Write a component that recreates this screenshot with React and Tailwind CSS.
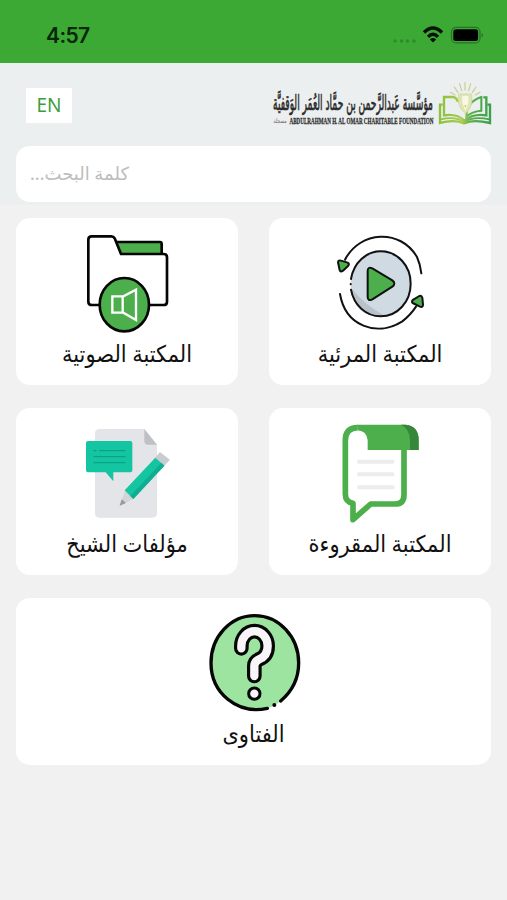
import clsx from "clsx";

const arabicFont = "font-['Noto_Sans','DejaVu_Sans',sans-serif]";

function StatusBar() {
  return (
    <div className="h-[63px] bg-[#3ca935] flex justify-between pl-[46px] pr-[22px]">
      <span className="mt-[20px] text-[21px] leading-[32px] font-semibold text-[#09270a] font-['Inter',sans-serif] tracking-[-0.6px]">
        4:57
      </span>
      <svg className="mt-[20px] w-[94px] h-[30px]" viewBox="391 20 94 30">
        <g fill="#2f8a2b">
          <circle cx="395" cy="41" r="1.7" />
          <circle cx="401.5" cy="41" r="1.7" />
          <circle cx="407.5" cy="41" r="1.7" />
          <circle cx="414" cy="41" r="1.7" />
        </g>
        <g fill="none" stroke="#031203" strokeWidth="3.3">
          <path d="M424 32.5 Q433 23.5 442 32.5" />
          <path d="M428 36.8 Q433 31.8 438 36.8" />
        </g>
        <path d="M429.9 39.4 Q433 36.6 436.1 39.4 L433 42.6Z" fill="#031203" />
        <rect x="451.5" y="27.3" width="28.5" height="15.6" rx="4.5" fill="none" stroke="#257323" strokeWidth="1.2" />
        <rect x="453.3" y="29.2" width="24.8" height="11.8" rx="2.5" fill="#000" />
        <path d="M481.7 33 Q484.6 35.2 481.7 37.4Z" fill="#257323" />
      </svg>
    </div>
  );
}

function Logo() {
  return (
    <svg className="w-[224px] h-[50px] overflow-visible" viewBox="270 80 224 50">
      <defs>
        <linearGradient id="book" gradientUnits="userSpaceOnUse" x1="8" x2="165" y1="0" y2="0">
          <stop offset="0" stopColor="#8cc03c" />
          <stop offset="0.45" stopColor="#a9cb50" />
          <stop offset="0.6" stopColor="#5fae4c" />
          <stop offset="1" stopColor="#39a04a" />
        </linearGradient>
      </defs>
      <text
        transform="translate(433 109.5) scale(1 2)"
        direction="rtl"
        textLength="160"
        lengthAdjust="spacingAndGlyphs"
        fontSize="10.5"
        fill="#2b2b2b"
        stroke="#2b2b2b"
        strokeWidth="0.35"
        fontFamily="'DejaVu Sans', sans-serif"
      >
        مؤسَّسة عَبدالرَّحمن بن حمَّاد العُمَر الوَقفيَّة
      </text>
      <text
        transform="translate(289.5 124) scale(1 1.7)"
        textLength="144"
        lengthAdjust="spacingAndGlyphs"
        fontSize="5.4"
        fontWeight="700"
        fill="#2c2c2c"
        stroke="#2c2c2c"
        strokeWidth="0.15"
        fontFamily="'Liberation Serif', serif"
      >
        ABDULRAHMAN H. AL OMAR CHARITABLE FOUNDATION
      </text>
      <text transform="translate(286.5 123) scale(1 1.5)" direction="rtl" textLength="13" lengthAdjust="spacingAndGlyphs" fontSize="4.4" fill="#666" fontFamily="'DejaVu Sans', sans-serif">
        مسجلة
      </text>
      <g transform="translate(436 80) scale(0.3333)">
        <g fill="none" stroke="url(#book)" strokeWidth="7">
          <path d="M20 74 H12 V129 Q55 117 84 130 Q112 117 162 129 V74 H154" />
          <path d="M66 66 Q62 52 50 51 H24 V106 Q62 100 86 122 Q110 100 151 106 V52 H142" />
          <path d="M91 110 C91 78 108 60 136 51 V92 Q108 94 91 110Z" strokeWidth="6" />
          <path d="M14 118 Q58 108 84 126 Q112 108 160 118" strokeWidth="5" />
        </g>
        <path d="M68 42 H107 V70 Q104 88 88 101 Q71 86 68 70Z" fill="#dfe6b4" stroke="#ccd790" strokeWidth="2" />
        <path d="M79 48 H97 V68 L88 92 L79 68Z" fill="#f7f8e6" />
        <circle cx="88" cy="78" r="3" fill="#c5d27a" />
        <path
          d="M87 7 V30 M71 11 L77 32 M104 11 L98 32 M55 21 L66 37 M120 21 L109 37 M43 37 L57 45 M132 37 L118 45"
          fill="none"
          stroke="#c6cf8a"
          strokeWidth="3.5"
          strokeLinecap="round"
        />
      </g>
    </svg>
  );
}

function AudioIcon() {
  return (
    <svg className="w-[120px] h-[115px]" viewBox="-9 -6 360 345">
      <g stroke="#050505" strokeWidth="8" strokeLinejoin="round">
        <path d="M138 66 H270 Q275 66 275 72 V104 H145Z" fill="#4caf4c" />
        <path d="M65 49 H124 Q131 49 134 55 L153 102 H281 Q291 102 291 112 V245 Q291 255 281 255 H66 Q55 255 55 245 V59 Q55 49 65 49Z" fill="#fff" />
        <ellipse cx="163" cy="254" rx="74" ry="80" fill="#4caf4c" />
      </g>
      <path d="M127 229 H160 L198 209 V300 L160 278 H127Z M158 229 V278" fill="none" stroke="#fff" strokeWidth="7" />
    </svg>
  );
}

function VideoIcon() {
  return (
    <svg className="w-[120px] h-[115px]" viewBox="31 -6 360 345">
      <ellipse cx="213" cy="191" rx="90" ry="98" fill="#cfdae3" />
      <path d="M125 205 Q165 255 226 288 Q132 297 125 205Z" fill="#b9c2ca" />
      <g fill="none" stroke="#111" strokeWidth="6" strokeLinecap="round">
        <path d="M124 177 C132 127 170 94 213 94 C264 94 303 137 303 191 C303 245 264 289 213 289 C168 289 132 254 124 209" />
        <path d="M106 119 C151 32 272 25 322 111 Q332 133 335 160" />
        <path d="M91 222 C107 317 200 353 278 304 Q302 286 319 260" />
        <path d="M123 192 V193" />
      </g>
      <g fill="#4caf4c" stroke="#111" strokeWidth="6" strokeLinejoin="round">
        <path d="M174 153 Q174 139 188 145 L248 181 Q260 190 248 200 L188 238 Q174 245 174 231Z" />
        <path d="M85 127 Q86 119 94 122 L114 128 Q121 132 115 138 L100 152 Q92 158 90 150Z" />
        <path d="M309 249 Q304 244 311 239 L329 228 Q336 226 338 233 L340 254 Q340 263 331 260Z" />
      </g>
    </svg>
  );
}

function WritingsIcon() {
  return (
    <svg className="w-[120px] h-[115px]" viewBox="21 -6 360 345">
      <path d="M119 57 H253 L291 104 V310 Q291 323 278 323 H118 Q105 323 105 310 V71 Q105 57 119 57Z" fill="#e4e5e8" />
      <path d="M253 57 L291 104 H264 Q253 104 253 93Z" fill="#bfc0c4" />
      <path d="M84 93 H211 Q217 93 217 99 V181 Q217 187 211 187 H160 V214 L137 187 H84 Q78 187 78 181 V99 Q78 93 84 93Z" fill="#14c5a1" />
      <path d="M102 122 H108 M119 122 H195 M102 140 H195 M102 158 H195" stroke="#0ba287" strokeWidth="4" strokeLinecap="round" fill="none" />
      <path d="M195 243 L179 287 L215 269 L329 149 L300 127Z" fill="#d2d4d8" />
      <path d="M300 127 L329 149 L313 167 L286 143Z" fill="#cacbce" />
      <path d="M286 143 L313 167 L220 267 L194 241Z" fill="#14c5a1" />
      <path d="M304 158 L313 167 L220 267 L211 258Z" fill="#0dae92" />
      <path d="M185 268 L179 287 L198 279Z" fill="#98999e" />
    </svg>
  );
}

function ReadingIcon() {
  return (
    <svg className="w-[120px] h-[115px]" viewBox="61 -6 360 345">
      <path d="M174 53 Q137 54 137 91 V252 Q137 276 160 280 V329 L213 282 H286 Q313 282 313 254 V112" fill="#fff" stroke="#4caf4c" strokeWidth="17" strokeLinejoin="round" />
      <path d="M172 44 H318 Q357 48 357 90 V120 H204 V91 Q201 63 174 61Z" fill="#4caf4c" />
      <path d="M303 44 H318 Q357 48 357 90 V120 H331 V90 Q330 55 303 44Z" fill="#37873a" />
      <path d="M178 155 H279 M178 193 H279 M178 232 H279" stroke="#ececec" strokeWidth="12" strokeLinecap="round" />
    </svg>
  );
}

function FatwaIcon() {
  const hook = "M152 145 V138 A39 44 0 0 1 231 138 Q231 168 205 178 Q191 184 191 198 V228";
  return (
    <svg className="w-[120px] h-[115px]" viewBox="10 -6 360 345">
      <ellipse cx="192" cy="189" rx="132" ry="142" fill="#9ce4a0" />
      <path d="M230 325 C139 345 61 278 61 189 C61 110 120 47 192 47 C264 47 324 110 324 189 Q324 257 270 303" fill="none" stroke="#060606" strokeWidth="10" strokeLinecap="round" />
      <circle cx="251" cy="315" r="6" fill="#060606" />
      <path d={hook} fill="none" stroke="#060606" strokeWidth="44" strokeLinecap="round" />
      <path d={hook} fill="none" stroke="#f7f5f7" strokeWidth="25" strokeLinecap="round" />
      <circle cx="191" cy="281" r="17" fill="#f7f5f7" stroke="#060606" strokeWidth="9" />
    </svg>
  );
}

const sections = [
  { label: "المكتبة المرئية", icon: VideoIcon },
  { label: "المكتبة الصوتية", icon: AudioIcon },
  { label: "المكتبة المقروءة", icon: ReadingIcon },
  { label: "مؤلفات الشيخ", icon: WritingsIcon },
  { label: "الفتاوى", icon: FatwaIcon, wide: true },
];

function SectionCard({ label, icon: Icon, wide }) {
  return (
    <button
      className={clsx(
        "h-[167px] bg-white rounded-[14px] flex flex-col items-center",
        wide && "col-span-2"
      )}
    >
      <Icon />
      <span
        className={clsx(
          arabicFont,
          "text-[21px] leading-[40px] text-[#111] whitespace-nowrap scale-y-110"
        )}
      >
        {label}
      </span>
    </button>
  );
}

export default function App() {
  return (
    <div className="min-h-screen bg-[#f1f1f1]">
      <StatusBar />
      <header className="h-[142px] bg-[#ebeff0] px-4">
        <div className="h-[83px] flex justify-between pl-[10px] pt-[17px] -mr-[3px]">
          <button className="mt-[8px] w-[46px] h-[35px] bg-white text-[#3c9d3c] text-[19px] leading-[35px] font-['Noto_Sans',sans-serif]">
            EN
          </button>
          <Logo />
        </div>
        <input
          dir="rtl"
          placeholder="كلمة البحث..."
          className={clsx(
            arabicFont,
            "block w-full h-[56px] rounded-[14px] bg-white px-[14px] pb-[2px] text-left text-[18px] placeholder:text-[#bdbdbd] outline-none"
          )}
        />
      </header>
      <main dir="rtl" className="grid grid-cols-2 gap-x-[31px] gap-y-[23px] px-4 pt-[13px]">
        {sections.map((section) => (
          <SectionCard key={section.label} {...section} />
        ))}
      </main>
    </div>
  );
}
